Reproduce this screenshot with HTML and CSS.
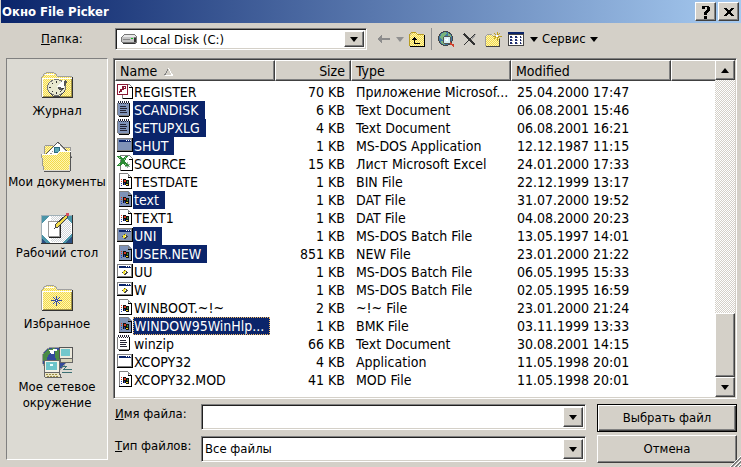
FILE: index.html
```html
<!DOCTYPE html>
<html lang="ru">
    <head>
        <meta charset="utf-8">
        <title>Окно File Picker</title>
        <link rel="stylesheet" href="styles.css">
    </head>
    <body>
        <!-- icon set -->
        <svg class="sprite" width="0" height="0">
            <defs>
                <pattern id="dots" width="2" height="2" patternUnits="userSpaceOnUse">
                    <rect width="2" height="2" fill="#fff6b0"/>
                    <path d="M0 0h1v1h-1zM1 1h1v1h-1z" fill="#f2d94c"/>
                </pattern>
                <pattern id="greydots" width="2" height="2" patternUnits="userSpaceOnUse">
                    <rect width="2" height="2" fill="#fff"/>
                    <path d="M0 0h1v1h-1zM1 1h1v1h-1z" fill="#d0d4d8"/>
                </pattern>
            </defs>
            <symbol id="txt" viewBox="0 0 16 16">
                <path class="paper" d="M1 2h11v12h-11z"/>
                <path d="M0 2h1v12h-1zM1 14h11v1h-11z" fill="#808080"/>
                <path d="M12 2h1v13h-1zM2 15h10v1h-10z" fill="#000"/>
                <path d="M1 0h1v2h-1zM3 0h1v2h-1zM5 0h1v2h-1zM7 0h1v2h-1zM9 0h1v2h-1zM11 0h1v2h-1zM2 2h1v1h-1zM4 2h1v1h-1zM6 2h1v1h-1zM8 2h1v1h-1zM10 2h1v1h-1z" fill="#223"/>
                <path d="M3 5h6v1h-6zM3 7h7v1h-7zM3 9h6v1h-6zM3 11h7v1h-7z" fill="#223"/>
            </symbol>
            <symbol id="win" viewBox="0 0 16 16">
                <path class="paper" d="M2 0h9l4 4v12h-13z"/>
                <path d="M2 0h9v1h-9zM2 0h1v15h-1zM11 1h1v4h-1zM12 2h1v1h-1zM13 3h1v1h-1z" fill="#808080"/>
                <path d="M14 4h1v12h-1zM2 15h13v1h-13zM11 4h3v1h-3z" fill="#000"/>
                <path d="M6 6h3v1h3v6h-3v-1h-3z" fill="#111"/>
                <path d="M4 6h1v1h-1zM7 7h2v2h-2zM4 8h1v1h-1z" fill="#d83a20"/>
                <path d="M10 8h1v2h-1z" fill="#2a9040"/>
                <path d="M4 10h1v1h-1zM7 10h1v2h-1zM4 12h1v1h-1z" fill="#2440b0"/>
                <path d="M9 11h2v1h-2z" fill="#e8d020"/>
            </symbol>
            <symbol id="app" viewBox="0 0 16 16">
                <path d="M0 1h16v14h-16z" fill="#808080"/>
                <path class="paper" d="M1 2h13v11h-13z"/>
                <path d="M2 3h12v2h-12z" fill="#0a246a"/>
                <path d="M9 3h1v1h-1zM11 3h1v1h-1zM13 3h1v1h-1z" fill="#fff"/>
                <path d="M15 1h1v14h-1zM0 14h16v1h-16z" fill="#000"/>
            </symbol>
            <symbol id="bat" viewBox="0 0 16 16">
                <use href="#app"/>
                <path d="M7 7h2v1h1v1h1v1h-1v1h-1v1h-2v-1h-1v-1h-1v-1h1v-1h1z" fill="#444"/>
                <path d="M6 8h2v-1h1v2h-1v2h-2z" fill="#f0e030"/>
                <path d="M8 9h1v1h-1z" fill="#fff"/>
            </symbol>
            <symbol id="mdb" viewBox="0 0 16 16">
                <path d="M5 1h7l3 3v11h-10z" fill="#fff" stroke="#808080"/>
                <path d="M15 4h1v12h-10v-1h9zM12 4h3v1h-3z" fill="#000"/>
                <path d="M0 1h11v11h-11z" fill="#8a1834"/>
                <path d="M1 2h9v9h-9z" fill="#fff"/>
                <path d="M5 3h4v3h-2v1h-2v2h-2v1h-1v-2h1v-2h2z" fill="#8a1834"/>
                <path d="M7 4h1v1h-1z" fill="#fff"/>
            </symbol>
            <symbol id="xls" viewBox="0 0 16 16">
                <path d="M3 0h9l4 4v12h-13z" fill="#808080"/>
                <path d="M4 1h8l3 3v11h-11z" fill="#fff"/>
                <path d="M15 4h1v12h-12v-1h11zM12 4h3v1h-3z" fill="#000"/>
                <path d="M8 9h5v1h-5zM8 11h5v1h-5zM10 7h1v6h-1z" fill="#9ab0a0"/>
                <path d="M0 1h4l2 3 2-3h3l-3 5 4 5h-4l-2-3-3 3h-3l4-5z" fill="#2c8a34"/>
                <path d="M2 2h1v1h-1zM3 4h1v1h-1zM8 2h1v1h-1zM7 4h1v1h-1zM2 9h1v1h-1zM8 9h1v1h-1z" fill="#a4d49c"/>
            </symbol>
            <symbol id="folder" viewBox="0 0 32 32">
                <path d="M1 27v-19l4-5h8l4 4h13v20z" fill="url(#dots)"/>
                <path d="M0 7h1v20h-1zM1 6h1v1h-1zM2 4h1v2h-1zM3 3h2v1h-2zM5 2h8v1h-8zM13 3h2v1h-2zM15 4h1v2h-1zM16 6h15v1h-15z" fill="#a0a0a0"/>
                <path d="M1 8h30v1h-30zM4 4h9v1h-9zM1 8h1v19h-1z" fill="#fff"/>
                <path d="M31 7h1v21h-1zM1 27h31v1h-31z" fill="#333"/>
                <path d="M30 9h1v18h-1zM2 26h29v1h-29z" fill="#a39548"/>
            </symbol>
        </svg>

        <div class="dialog">
            <div class="titlebar">
                <span class="title">Окно File Picker</span>
                <button class="btn title-btn" type="button" aria-label="Справка">
                    <svg width="12" height="14" viewBox="0 0 12 14"><path d="M2 1h7v1h1v4h-1v1h-1v1h-1v2h-3v-3h1v-1h1v-1h1v-3h-2v2h-3v-3h1zM4 11h3v3h-3z"/></svg>
                </button>
                <button class="btn title-btn" type="button" aria-label="Закрыть">
                    <svg width="12" height="12" viewBox="0 0 12 12"><path d="M1 2h3v1h1v1h2v-1h1v-1h3v1h-1v1h-1v1h-1v2h1v1h1v1h1v1h-3v-1h-1v-1h-2v1h-1v1h-3v-1h1v-1h1v-1h1v-2h-1v-1h-1v-1h-1z"/></svg>
                </button>
            </div>

            <div class="toolbar">
                <label class="folder-label" for="folder-select"><u>П</u>апка:</label>
                <div class="combo folder-combo">
                    <svg class="disk" width="16" height="10" viewBox="0 0 16 10">
                        <path d="M3 0h11l2 3v5l-2 2h-12l-2-2v-5z" fill="#777"/>
                        <path d="M3 1h11l1 2h-13z" fill="#e8e8e8"/>
                        <path d="M1 3h12v5h-12z" fill="#c4c4c4"/>
                        <path d="M2 5h7v1h-7z" fill="#888"/>
                        <path d="M10 4h2v1h-2z" fill="#10c020"/>
                        <path d="M13 4h2v4h-2zM2 9h12v1h-12z" fill="#333"/>
                    </svg>
                    <select id="folder-select">
                        <option>Local Disk (C:)</option>
                    </select>
                    <span class="btn drop"></span>
                </div>
                <button class="tool back" type="button" aria-label="Назад">
                    <svg width="13" height="10" viewBox="0 0 13 10"><path d="M0 5l5-5v4h8v2h-8v4z" fill="#8c8c8c"/></svg>
                </button>
                <button class="tool" type="button" aria-label="История"><span class="arrow grey"></span></button>
                <button class="tool up" type="button" aria-label="На уровень вверх">
                    <svg width="16" height="15" viewBox="0 0 16 15">
                        <path d="M1 14v-11l2-2h5l2 2h5v11z" fill="url(#dots)"/>
                        <path d="M0 2h1v12h-1zM1 1h1v1h-1zM2 0h5v1h-5zM7 1h1v1h-1zM8 2h7v1h-7z" fill="#b89c20"/>
                        <path d="M15 3h1v12h-15v-1h14z" fill="#000"/>
                        <path d="M5 5h1v1h1v1h1v1h-2v3h5v1h-6v-4h-2v-1h1v-1h1z" fill="#000"/>
                    </svg>
                </button>
                <span class="separator"></span>
                <button class="tool search" type="button" aria-label="Поиск в Интернете">
                    <svg width="17" height="16" viewBox="0 0 17 16">
                        <circle cx="7.500" cy="7.500" r="7" fill="#3f78a4" stroke="#444"/>
                        <path d="M3 3l4-2 2 2-3 2-1 4-3-2zM10 2l3 2v3l-3-2zM3 10l4 1v3l-3-1z" fill="#7ab47c"/>
                        <circle cx="9" cy="9" r="4" fill="#d8f0f4" stroke="#555"/>
                        <path d="M7 8h2v-1h1v3h-2z" fill="#fff"/>
                        <path d="M12 12l4 3" stroke="#d0402c" stroke-width="2"/>
                    </svg>
                </button>
                <button class="tool delete" type="button" aria-label="Удалить">
                    <svg width="14" height="13" viewBox="0 0 14 13">
                        <path d="M1 1l11 11" stroke="#333" stroke-width="2"/>
                        <path d="M12 1l-11 11" stroke="#333"/>
                        <path d="M13 1l-5 6" stroke="#999"/>
                    </svg>
                </button>
                <button class="tool newdir" type="button" aria-label="Создать папку">
                    <svg width="17" height="15" viewBox="0 0 17 15">
                        <path d="M1 14v-10l2-2h4l2 2h5v10z" fill="url(#dots)"/>
                        <path d="M0 4h1v10h-1zM1 3h1v1h-1zM2 2h5v1h-5zM7 3h1v1h-1zM8 4h3v1h-3z" fill="#a0a0a0"/>
                        <path d="M14 7h1v8h-14v-1h13z" fill="#444"/>
                        <path d="M12 0v9M8 4h9M9 1l6 6M15 1l-6 6" stroke="#bc9f20"/>
                        <path d="M11 3h2v2h-2z" fill="#fff"/>
                    </svg>
                </button>
                <button class="tool views" type="button" aria-label="Представления">
                    <svg width="16" height="14" viewBox="0 0 16 14">
                        <path d="M0 0h16v14h-16z" fill="#444"/>
                        <path d="M1 3h14v10h-14z" fill="#fff"/>
                        <path d="M0 0h16v2h-16z" fill="#0a246a"/>
                        <path d="M2 4h2v2h-2zM7 4h2v2h-2zM12 4h1v2h-1zM2 7h2v2h-2zM7 7h2v2h-2zM12 7h1v2h-1zM2 10h2v2h-2zM7 10h2v2h-2zM12 10h1v2h-1z" fill="#1c2c70"/>
                        <path d="M4 5h1v1h-1zM9 5h1v1h-1zM13 5h1v1h-1zM4 8h1v1h-1zM9 8h1v1h-1zM13 8h1v1h-1zM4 11h1v1h-1zM9 11h1v1h-1zM13 11h1v1h-1z" fill="#999"/>
                    </svg>
                    <span class="arrow"></span>
                </button>
                <button class="tool service" type="button">Сервис<span class="arrow"></span></button>
            </div>

            <div class="content">
                <nav class="places">
                    <a class="place" href="#">
                        <svg width="32" height="32" viewBox="0 0 32 32">
                            <use href="#folder"/>
                            <ellipse cx="15.500" cy="17.500" rx="9" ry="8" fill="#e9e9d0" stroke="#777"/>
                            <path d="M16 18l8-8 2 2-5 9z" fill="#555"/>
                            <path d="M16 17l7-8v9z" fill="#fff"/>
                            <path d="M15 11h1v2h-1zM15 22h1v2h-1zM8 17h2v1h-2zM11 13h1v1h-1zM11 21h1v1h-1zM19 21h1v1h-1zM21 18h2v1h-2z" fill="#333"/>
                            <path d="M8 22l4 4h7l5-5" fill="none" stroke="#444"/>
                        </svg>
                        <span>Журнал</span>
                    </a>
                    <a class="place" href="#">
                        <svg width="32" height="32" viewBox="0 0 32 32">
                            <path d="M3 13v-7l2-2h6l2 2h16v10z" fill="url(#dots)" stroke="#999"/>
                            <path d="M5 13l12-12 14 15-8 5z" fill="#fff" stroke="#555"/>
                            <path d="M17 2l14 14M9 12h2v-2h2v-2h2" stroke="#999" stroke-dasharray="2 1" fill="none"/>
                            <circle cx="16" cy="9" r="3" fill="#5aa8b4" stroke="#2a6a80"/>
                            <path d="M1 13h15l3-3h11l-2 19h-25z" fill="url(#dots)"/>
                            <path d="M1 13h15l3-3h11" stroke="#fff" fill="none"/>
                            <path d="M.5 13l2 16" stroke="#999"/>
                            <path d="M30 11l-1 19h-26" stroke="#555" fill="none"/>
                        </svg>
                        <span>Мои документы</span>
                    </a>
                    <a class="place" href="#">
                        <svg width="32" height="32" viewBox="0 0 32 32">
                            <path d="M0 3h31v28h-31z" fill="#fff"/>
                            <path d="M10 4h20v26h-20z" fill="url(#greydots)"/>
                            <path d="M0 3h9l-9 9zM22 3h9v9zM0 22l9 9h-9zM31 21v10h-9z" fill="#4b95a8"/>
                            <path d="M0 26l5 5h-5zM31 24v7h-7z" fill="#2b4f80"/>
                            <path d="M0 3h1v28h-1zM1 3h30v1h-30z" fill="#a0b0b8"/>
                            <path d="M31 3h1v29h-32v-1h31z" fill="#333"/>
                            <path d="M7.500 9.500h11v15h-11z" fill="#fff" stroke="#999"/>
                            <path d="M19 10h1v16h-12v-1h11z" fill="#222"/>
                            <path d="M14 16l1-4 10-9 2 2-10 10z" fill="#f2dc4c" stroke="#444"/>
                            <path d="M25 1h3v3h-3z" fill="#d85060"/>
                        </svg>
                        <span>Рабочий стол</span>
                    </a>
                    <a class="place" href="#">
                        <svg width="32" height="32" viewBox="0 0 32 32">
                            <use href="#folder"/>
                            <path d="M15.500 13v10M10 17.500h11M12 14l7 7M19 14l-7 7" stroke="#354c98"/>
                            <path d="M15 17h1v1h-1z" fill="#fff"/>
                        </svg>
                        <span>Избранное</span>
                    </a>
                    <a class="place" href="#">
                        <svg width="32" height="32" viewBox="0 0 32 32">
                            <circle cx="13" cy="13" r="12" fill="#334a9c" stroke="#999"/>
                            <path d="M2 9l5-6 7-1-3 4-4 3-1 5-4 1zM14 3l6 2-2 6 3 4-4 2-3-6z" fill="#4a8b45"/>
                            <path d="M8 4h4v-1h4v2h-3v3h-3z" fill="#fff"/>
                            <path d="M18 1h13v11h-13z" fill="#ece9dc" stroke="#555"/>
                            <path d="M20 3h9v7h-9z" fill="#72c7cc"/>
                            <path d="M19 12h12l1 4h-13z" fill="#d8d4b8" stroke="#666"/>
                            <path d="M3 14h15v12h-15z" fill="#f4f1e4" stroke="#666"/>
                            <path d="M5 16h11v8h-11z" fill="#6cc4ca"/>
                            <path d="M9 18h3v2h-3z" fill="#e8ffff"/>
                            <path d="M3 26h15l2 5h-16z" fill="#ece6c4" stroke="#666"/>
                            <path d="M5 28h12M6 30h12" stroke="#9b8d45" stroke-dasharray="2 1"/>
                            <path d="M20 20h6l-3 3h8M21 26h10" stroke="#3b7074" fill="none"/>
                        </svg>
                        <span>Мое сетевое окружение</span>
                    </a>
                </nav>

                <div class="main">
                    <div class="list">
                        <table class="files">
                            <colgroup>
                                <col class="c-name"><col class="c-size"><col class="c-type"><col class="c-date"><col>
                            </colgroup>
                            <thead>
                                <tr>
                                    <th>Name
                                        <svg class="sort" width="9" height="8" viewBox="0 0 9 8"><path d="M4.500 0l-4 7.500" stroke="#808080"/><path d="M4.500 0l4 7.500h-8" stroke="#fff" fill="none"/></svg>
                                    </th>
                                    <th class="size">Size</th>
                                    <th>Type</th>
                                    <th>Modified</th>
                                    <th></th>
                                </tr>
                            </thead>
                            <tbody>
                                <tr><td><svg class="icon"><use href="#mdb"/></svg><span>REGISTER</span></td><td>70 KB</td><td>Приложение Microsof...</td><td>25.04.2000 17:47</td></tr>
                                <tr class="selected"><td><svg class="icon"><use href="#txt"/></svg><span>SCANDISK</span></td><td>6 KB</td><td>Text Document</td><td>06.08.2001 15:46</td></tr>
                                <tr class="selected"><td><svg class="icon"><use href="#txt"/></svg><span>SETUPXLG</span></td><td>4 KB</td><td>Text Document</td><td>06.08.2001 16:21</td></tr>
                                <tr class="selected"><td><svg class="icon"><use href="#app"/></svg><span>SHUT</span></td><td>1 KB</td><td>MS-DOS Application</td><td>12.12.1987 11:15</td></tr>
                                <tr><td><svg class="icon"><use href="#xls"/></svg><span>SOURCE</span></td><td>15 KB</td><td>Лист Microsoft Excel</td><td>24.01.2000 17:33</td></tr>
                                <tr><td><svg class="icon"><use href="#win"/></svg><span>TESTDATE</span></td><td>1 KB</td><td>BIN File</td><td>22.12.1999 13:17</td></tr>
                                <tr class="selected"><td><svg class="icon"><use href="#win"/></svg><span>text</span></td><td>1 KB</td><td>DAT File</td><td>31.07.2000 19:52</td></tr>
                                <tr><td><svg class="icon"><use href="#win"/></svg><span>TEXT1</span></td><td>1 KB</td><td>DAT File</td><td>04.08.2000 20:23</td></tr>
                                <tr class="selected"><td><svg class="icon"><use href="#bat"/></svg><span>UNI</span></td><td>1 KB</td><td>MS-DOS Batch File</td><td>13.05.1997 14:01</td></tr>
                                <tr class="selected"><td><svg class="icon"><use href="#win"/></svg><span>USER.NEW</span></td><td>851 KB</td><td>NEW File</td><td>23.01.2000 21:22</td></tr>
                                <tr><td><svg class="icon"><use href="#bat"/></svg><span>UU</span></td><td>1 KB</td><td>MS-DOS Batch File</td><td>06.05.1995 15:33</td></tr>
                                <tr><td><svg class="icon"><use href="#bat"/></svg><span>W</span></td><td>1 KB</td><td>MS-DOS Batch File</td><td>02.05.1995 16:59</td></tr>
                                <tr><td><svg class="icon"><use href="#win"/></svg><span>WINBOOT.~!~</span></td><td>2 KB</td><td>~!~ File</td><td>23.01.2000 21:24</td></tr>
                                <tr class="selected focused"><td><svg class="icon"><use href="#win"/></svg><span>WINDOW95WinHlp...</span></td><td>1 KB</td><td>BMK File</td><td>03.11.1999 13:33</td></tr>
                                <tr><td><svg class="icon"><use href="#txt"/></svg><span>winzip</span></td><td>66 KB</td><td>Text Document</td><td>30.08.2001 14:15</td></tr>
                                <tr><td><svg class="icon"><use href="#app"/></svg><span>XCOPY32</span></td><td>4 KB</td><td>Application</td><td>11.05.1998 20:01</td></tr>
                                <tr><td><svg class="icon"><use href="#win"/></svg><span>XCOPY32.MOD</span></td><td>41 KB</td><td>MOD File</td><td>11.05.1998 20:01</td></tr>
                            </tbody>
                        </table>
                        <div class="scrollbar">
                            <button class="btn scroll-btn" type="button" aria-label="Вверх"><span class="arrow top"></span></button>
                            <div class="track"></div>
                            <div class="btn thumb"></div>
                            <button class="btn scroll-btn" type="button" aria-label="Вниз"><span class="arrow"></span></button>
                        </div>
                    </div>

                    <div class="bottom">
                        <div class="fields">
                            <label for="file-name"><u>И</u>мя файла:</label>
                            <div class="combo">
                                <input id="file-name" type="text">
                                <button class="btn drop" type="button" aria-label="Список имен"></button>
                            </div>
                            <label for="file-type"><u>Т</u>ип файлов:</label>
                            <div class="combo">
                                <select id="file-type">
                                    <option>Все файлы</option>
                                </select>
                                <span class="btn drop"></span>
                            </div>
                        </div>
                        <div class="actions">
                            <button class="btn default" type="button">Выбрать файл</button>
                            <button class="btn" type="button">Отмена</button>
                        </div>
                    </div>
                </div>
            </div>
            <svg class="grip" width="11" height="11" viewBox="0 0 11 11">
                <path d="M0 11l11-11M4 11l7-7M8 11l3-3" stroke="#fff"/>
                <path d="M1 11l10-10M2 11l9-9M5 11l6-6M6 11l5-5M9 11l2-2" stroke="#808080"/>
            </svg>
        </div>
    </body>
</html>
```
FILE: styles.css
```css
html,body {
    margin:0;
}
body {
    background-color: #d4d0c8;
    color: #000;
    font-family: "DejaVu Sans Condensed", "Liberation Sans", sans-serif;
    font-size: 14px;
    line-height: 18px;
}
button, input, select {
    font: inherit;
    color: inherit;
}
svg {
    display: block;
    flex: none;
    shape-rendering: crispEdges;
}
.sprite {
    position: absolute;
}
.dialog {
    position: relative;
    display: flex;
    flex-direction: column;
    min-height: 100vh;
}
/* raised 3d button */
.btn {
    display: flex;
    align-items: center;
    justify-content: center;
    box-sizing: border-box;
    padding: 0;
    background-color: #d4d0c8;
    border: 1px solid;
    border-color: #fff #404040 #404040 #fff;
    border-radius: 0;
    box-shadow: inset -1px -1px #808080;
}
.arrow, .drop::after {
    content: "";
    border: 4px solid transparent;
    border-top: 5px solid #000;
    border-bottom: 0;
}
.arrow.grey {
    border-top-color: #909090;
}
.arrow.top {
    border-top: 0;
    border-bottom: 5px solid #000;
}
/* title */
.titlebar {
    display: flex;
    align-items: center;
    gap: 2px;
    height: 23px;
    margin-left: 1px;
    padding: 0 2px 0 1px;
    box-sizing: border-box;
    background: linear-gradient(to right, #0a246a, #a6caf0);
}
.title {
    flex: 1;
    color: #fff;
    font-weight: bold;
    font-size: 13px;
}
.title-btn {
    width: 21px;
    height: 19px;
}
/* toolbar */
.toolbar {
    display: flex;
    align-items: center;
    height: 35px;
    box-sizing: border-box;
    padding-bottom: 3px;
}
.folder-label {
    width: 74px;
    padding-left: 41px;
    font-size: 13px;
}
.folder-combo {
    width: 252px;
}
.disk {
    margin: 0 2px 0 3px;
}
.tool {
    display: flex;
    align-items: center;
    gap: 6px;
    height: 22px;
    padding: 0;
    border: 0;
    background: none;
}
.back {
    margin: 0 6px 0 10px;
}
.up {
    margin: 0 6px 0 5px;
}
.separator {
    width: 1px;
    height: 22px;
    background-color: #909090;
}
.search {
    margin: 0 8px 0 6px;
}
.delete {
    margin-right: 8px;
}
.newdir {
    margin-right: 6px;
}
.service {
    gap: 4px;
    margin-left: 4px;
    font-size: 13px;
}
/* combo box */
.combo {
    display: flex;
    align-items: center;
    height: 22px;
    box-sizing: border-box;
    min-width: 0;
    background-color: #fff;
    border: 1px solid;
    border-color: #808080 #fff #fff #808080;
    box-shadow: inset 1px 1px #202020, inset -1px -1px #d4d0c8;
    padding: 2px;
}
.combo input,
.combo select {
    flex: 1;
    min-width: 0;
    height: 100%;
    box-sizing: border-box;
    padding: 0 0 0 1px;
    border: 0;
    outline: 0;
    background: none;
    appearance: none;
}
.combo select {
    font-size: 13px;
}
.drop {
    align-self: stretch;
    width: 20px;
}
.content {
    flex: 1;
    display: flex;
    gap: 5px;
    padding: 0 4px 4px 6px;
}
/* left bar */
.places {
    width: 102px;
    box-sizing: border-box;
    flex: none;
    margin-bottom: 3px;
    border: 1px solid;
    border-color: #808080 #fff #fff #808080;
    background-color: #dcdad3;
}
.place {
    display: flex;
    flex-direction: column;
    align-items: center;
    justify-content: center;
    gap: 1px;
    height: 71px;
    font-size: 13px;
    line-height: 16px;
    text-align: center;
    text-decoration: none;
    color: #000;
}
/* file list */
.main {
    flex: 1;
    min-width: 0;
    display: flex;
    flex-direction: column;
    gap: 5px;
}
.list {
    flex: 1;
    display: flex;
    align-items: flex-start;
    background-color: #fff;
    border: 1px solid;
    border-color: #808080 #fff #fff #808080;
    box-shadow: inset 1px 1px #404040, inset -1px -1px #d4d0c8;
    padding: 1px;
}
.files {
    flex: 1;
    width: 100%;
    min-width: 0;
    table-layout: fixed;
    border-collapse: separate;
    border-spacing: 0;
}
.c-name, .c-type, .c-date {
    width: 160px;
}
.c-size {
    width: 76px;
}
th {
    height: 21px;
    box-sizing: border-box;
    padding: 0 4px;
    background-color: #d4d0c8;
    border: 1px solid;
    border-color: #fff #404040 #404040 #fff;
    box-shadow: inset -1px -1px #808080;
    font-weight: normal;
    text-align: left;
}
th:last-child {
    border-right: 0;
    box-shadow: inset 0 -1px #808080;
}
.sort {
    display: inline-block;
    margin-left: 3px;
}
th.size, td:nth-child(2) {
    text-align: right;
}
th.size {
    padding-right: 5px;
}
td {
    height: 18px;
    padding: 0 6px 0 5px;
    white-space: nowrap;
}
td:last-child {
    padding-left: 6px;
}
tbody tr:first-child td {
    padding-top: 2px;
}
td:first-child {
    display: flex;
    padding-left: 2px;
    padding-right: 0;
}
td:first-child span {
    padding: 0 6px 0 1px;
}
.icon {
    width: 16px;
    height: 16px;
    --paper: #fff;
}
.paper {
    fill: var(--paper);
}
.selected .icon {
    --paper: #7f93b8;
}
.selected span {
    background-color: #0a246a;
    color: #fff;
}
.focused span {
    outline: 1px dotted #f0b860;
    outline-offset: -1px;
}
/* scrollbar */
.scrollbar {
    align-self: stretch;
    display: flex;
    flex: none;
    flex-direction: column;
    width: 20px;
}
.scroll-btn {
    width: 20px;
    height: 20px;
}
.track {
    flex: 1;
    background: repeating-conic-gradient(#fff 0 25%, #d4d0c8 0 50%) 0 0 / 2px 2px;
}
.thumb {
    height: 64px;
}
/* bottom */
.bottom {
    display: flex;
    gap: 11px;
}
.fields {
    flex: 1;
    display: grid;
    grid-template-columns: 88px 1fr;
    align-content: start;
    gap: 6px 0;
}
.fields label {
    padding: 1px 0 0 2px;
    font-size: 13px;
}
.fields .combo {
    height: 26px;
}
.actions {
    display: flex;
    flex-direction: column;
    gap: 3px;
    width: 140px;
}
.actions .btn {
    height: 28px;
    font-size: 13px;
}
.actions .default {
    outline: 1px solid #000;
    outline-offset: -1px;
    border-color: #000;
    box-shadow: inset 1px 1px #fff, inset -1px -1px #404040, inset -2px -2px #808080;
}
.grip {
    position: absolute;
    right: 0;
    bottom: 0;
}
```
